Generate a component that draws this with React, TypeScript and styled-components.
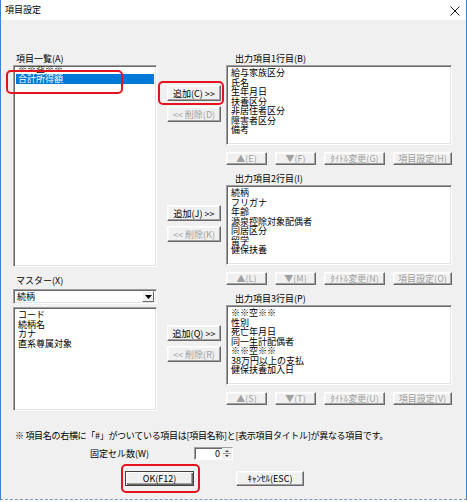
import React from 'react';
import styled, { createGlobalStyle } from 'styled-components';

const GlobalStyle = createGlobalStyle`
  html, body {
    margin: 0;
    padding: 0;
    background: #ffffff;
  }
  body {
    font-family: "Noto Sans CJK JP", "Noto Sans", sans-serif;
    font-size: 9px;
    color: #000000;
  }
  * {
    box-sizing: border-box;
  }
`;

interface OutputGroup {
  label: string;
  add: string;
  del: string;
  items: string[];
  tools: string[];
}

const groups: OutputGroup[] = [
  {
    label: '出力項目1行目(B)',
    add: '追加(C) >>',
    del: '<< 削除(D)',
    items: ['給与家族区分', '氏名', '生年月日', '扶養区分', '非居住者区分', '障害者区分', '備考'],
    tools: ['▲(E)', '▼(F)', 'ﾀｲﾄﾙ変更(G)', '項目設定(H)'],
  },
  {
    label: '出力項目2行目(I)',
    add: '追加(J) >>',
    del: '<< 削除(K)',
    items: ['続柄', 'フリガナ', '年齢', '源泉控除対象配偶者', '同居区分', '留学', '健保扶養'],
    tools: ['▲(L)', '▼(M)', 'ﾀｲﾄﾙ変更(N)', '項目設定(O)'],
  },
  {
    label: '出力項目3行目(P)',
    add: '追加(Q) >>',
    del: '<< 削除(R)',
    items: ['※※空※※', '性別', '死亡年月日', '同一生計配偶者', '※※空※※', '38万円以上の支払', '健保扶養加入日'],
    tools: ['▲(S)', '▼(T)', 'ﾀｲﾄﾙ変更(U)', '項目設定(V)'],
  },
];

const toolWidths = [41, 41, 61, 59];

const masterItems = ['コード', '続柄名', 'カナ', '直系尊属対象'];

const App = () => (
  <>
    <GlobalStyle />
    <Window>
      <TitleBar>
        <Title>項目設定</Title>
        <CloseIcon width="10" height="10" viewBox="0 0 10 10">
          <path d="M0.5 0.5 L9.5 9.5 M9.5 0.5 L0.5 9.5" stroke="#1a1a1a" strokeWidth="1" />
        </CloseIcon>
      </TitleBar>
      <Body>
        <Main>
          <LeftColumn>
            <FieldLabel>項目一覧(A)</FieldLabel>
            <Anchor>
              <ListBox $height={202}>
                <ScrolledItems>
                  <SourceItem>※※空※※</SourceItem>
                  <SourceItem $selected>合計所得額</SourceItem>
                </ScrolledItems>
              </ListBox>
              <Highlight style={{ left: -7, top: 5, width: 117, height: 24 }} />
            </Anchor>
            <FieldLabel $gap={9}>マスター(X)</FieldLabel>
            <Combo>
              <ComboText>続柄</ComboText>
              <ComboButton>
                <svg width="7" height="4" viewBox="0 0 7 4">
                  <path d="M0 0 H7 L3.5 4 Z" fill="#000" />
                </svg>
              </ComboButton>
            </Combo>
            <ListBox $height={104} $gap={3}>
              <ItemStack>
                {masterItems.map((item) => (
                  <Item key={item}>{item}</Item>
                ))}
              </ItemStack>
            </ListBox>
          </LeftColumn>
          <RightArea>
            {groups.map((group, gi) => (
              <Group key={group.label}>
                <GroupLabel>{group.label}</GroupLabel>
                <MoveButtons>
                  <Anchor>
                    <PushButton $width={54} $height={16}>
                      {group.add}
                    </PushButton>
                    {gi === 0 && <Highlight style={{ left: -9, top: -4, width: 66, height: 24 }} />}
                  </Anchor>
                  <PushButton $width={54} $height={16} $disabled>
                    {group.del}
                  </PushButton>
                </MoveButtons>
                <GroupList $height={80}>
                  <ItemStack>
                    {group.items.map((item, i) => (
                      <Item key={i}>{item}</Item>
                    ))}
                  </ItemStack>
                </GroupList>
                <ToolRow>
                  {group.tools.map((tool, i) => (
                    <PushButton key={tool} $width={toolWidths[i]} $height={13} $disabled>
                      {tool}
                    </PushButton>
                  ))}
                </ToolRow>
              </Group>
            ))}
          </RightArea>
        </Main>
        <Note>※ 項目名の右横に「#」がついている項目は[項目名称]と[表示項目タイトル]が異なる項目です。</Note>
        <FixedRow>
          <FixedLabel>固定セル数(W)</FixedLabel>
          <SpinBox>
            <SpinValue>0</SpinValue>
            <SpinArrows width="10" height="11" viewBox="0 0 10 11">
              <path d="M3 4 L5 2 L7 4 Z" fill="#404040" />
              <path d="M1 5.5 H9" stroke="#a0a0a0" strokeWidth="1" />
              <path d="M3 7 L5 9 L7 7 Z" fill="#404040" />
            </SpinArrows>
          </SpinBox>
        </FixedRow>
        <FooterRow>
          <Anchor>
            <PushButton $width={69} $height={15} $default>
              OK(F12)
            </PushButton>
            <Highlight style={{ left: -4, top: -7, width: 79, height: 29 }} />
          </Anchor>
          <PushButton $width={68} $height={15}>
            ｷｬﾝｾﾙ(ESC)
          </PushButton>
        </FooterRow>
      </Body>
    </Window>
  </>
);

const Window = styled.div`
  width: 467px;
  height: 500px;
  display: flex;
  flex-direction: column;
  border-left: 1px solid #3b80d3;
  border-right: 1px solid #3b80d3;
  border-bottom: 1px dashed #7b9cc4;
  background: #f0f0f0;
`;

const TitleBar = styled.div`
  height: 20px;
  display: flex;
  align-items: center;
  justify-content: space-between;
  padding: 0 6px 1px 4px;
  background: #ffffff;
`;

const Title = styled.span`
  font-size: 9px;
  line-height: 10px;
`;

const CloseIcon = styled.svg`
  display: block;
  margin-top: 2px;
`;

const Body = styled.div`
  flex: 1;
  display: flex;
  flex-direction: column;
  padding-top: 34px;
`;

const Main = styled.div`
  display: flex;
  align-items: flex-start;
  padding-left: 12px;
`;

const LeftColumn = styled.div`
  width: 144px;
  display: flex;
  flex-direction: column;
`;

const RightArea = styled.div`
  margin-left: 10px;
  display: flex;
  flex-direction: column;
  gap: 9px;
`;

const FieldLabel = styled.div<{ $gap?: number }>`
  height: 11px;
  line-height: 10px;
  padding-left: 3px;
  margin-top: ${(p) => p.$gap ?? 0}px;
  white-space: nowrap;
`;

const GroupLabel = styled(FieldLabel)`
  grid-column: 2;
  grid-row: 1;
  padding-left: 9px;
`;

const Anchor = styled.div`
  position: relative;
`;

const Highlight = styled.div`
  position: absolute;
  border: 2px solid #e5131d;
  border-radius: 5px;
  pointer-events: none;
`;

const ListBox = styled.div<{ $height: number; $gap?: number }>`
  height: ${(p) => p.$height}px;
  margin-top: ${(p) => p.$gap ?? 0}px;
  background: #ffffff;
  border-style: solid;
  border-width: 1px;
  border-color: #a0a0a0 #ffffff #ffffff #a0a0a0;
  box-shadow: inset 1px 1px 0 #696969, inset -1px -1px 0 #e3e3e3;
  padding: 2px;
  overflow: hidden;
`;

const GroupList = styled(ListBox)`
  grid-column: 2;
  grid-row: 2;
`;

const ScrolledItems = styled.div`
  margin-top: -4px;
`;

const SourceItem = styled.div<{ $selected?: boolean }>`
  height: 10px;
  line-height: 10px;
  padding-left: 2px;
  white-space: nowrap;
  background: ${(p) => (p.$selected ? '#0078d7' : 'transparent')};
  color: ${(p) => (p.$selected ? '#ffffff' : '#000000')};
`;

const ItemStack = styled.div`
  padding-left: 2px;
`;

const Item = styled.div`
  height: 9.5px;
  line-height: 9.5px;
  white-space: nowrap;
`;

const Group = styled.div`
  display: grid;
  grid-template-columns: 54px 226px;
  grid-template-rows: 11px 80px 20px;
  column-gap: 5px;
`;

const MoveButtons = styled.div`
  grid-column: 1;
  grid-row: 2;
  display: flex;
  flex-direction: column;
  gap: 5px;
  padding-top: 20px;
`;

const ToolRow = styled.div`
  grid-column: 2;
  grid-row: 3;
  display: flex;
  justify-content: space-between;
  padding-top: 7px;
`;

const PushButton = styled.div<{
  $width: number;
  $height: number;
  $disabled?: boolean;
  $default?: boolean;
}>`
  width: ${(p) => p.$width}px;
  height: ${(p) => p.$height}px;
  display: flex;
  align-items: center;
  justify-content: center;
  font-size: 9px;
  line-height: 9px;
  white-space: nowrap;
  background: #f0f0f0;
  color: ${(p) => (p.$disabled ? '#a0a0a0' : '#000000')};
  border-style: solid;
  border-width: 1px;
  border-color: ${(p) =>
    p.$default ? '#404040' : '#ffffff #696969 #696969 #ffffff'};
  box-shadow: ${(p) =>
    p.$default
      ? 'inset 1px 1px 0 #ffffff, inset -1px -1px 0 #696969, inset -2px -2px 0 #a0a0a0'
      : 'inset -1px -1px 0 #a0a0a0, inset 1px 1px 0 #f8f8f8'};
`;

const Combo = styled.div`
  margin-top: 2px;
  height: 15px;
  display: flex;
  align-items: center;
  justify-content: space-between;
  background: #ffffff;
  border-style: solid;
  border-width: 1px;
  border-color: #a0a0a0 #ffffff #ffffff #a0a0a0;
  box-shadow: inset 1px 1px 0 #696969, inset -1px -1px 0 #e3e3e3;
  padding: 1px 2px 1px 3px;
`;

const ComboText = styled.span`
  line-height: 10px;
`;

const ComboButton = styled.div`
  width: 12px;
  height: 11px;
  display: flex;
  align-items: center;
  justify-content: center;
  background: #f0f0f0;
  border-style: solid;
  border-width: 1px;
  border-color: #ffffff #696969 #696969 #ffffff;
`;

const Note = styled.div`
  margin-top: 20px;
  padding-left: 14px;
  height: 10px;
  font-size: 9px;
  line-height: 10px;
  letter-spacing: -0.3px;
  white-space: nowrap;
`;

const FixedRow = styled.div`
  margin-top: 6px;
  padding-left: 89px;
  display: flex;
  align-items: center;
`;

const FixedLabel = styled.span`
  width: 104px;
  line-height: 10px;
`;

const SpinBox = styled.div`
  width: 39px;
  height: 13px;
  display: flex;
  align-items: center;
  justify-content: flex-end;
  background: #ffffff;
  border-style: solid;
  border-width: 1px;
  border-color: #a0a0a0 #ffffff #ffffff #a0a0a0;
  box-shadow: inset 1px 1px 0 #696969;
`;

const SpinValue = styled.span`
  line-height: 10px;
  padding-right: 2px;
`;

const SpinArrows = styled.svg`
  display: block;
  background: #f0f0f0;
`;

const FooterRow = styled.div`
  margin-top: 11px;
  padding-left: 124px;
  display: flex;
  gap: 42px;
`;

export default App;
